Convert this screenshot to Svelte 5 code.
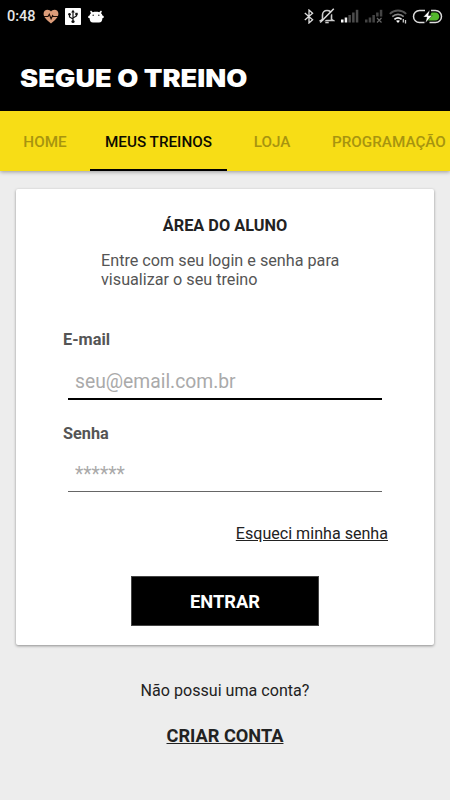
<script lang="ts">
	let email = $state('');
	let senha = $state('');
	let activeTab = $state('MEUS TREINOS');

	const tabs = ['HOME', 'MEUS TREINOS', 'LOJA', 'PROGRAMAÇÃO'];

	function handleSubmit(e: Event) {
		e.preventDefault();
	}
</script>

<div class="screen">
	<div class="top">
		<div class="status-bar">
			<span class="clock">0:48</span>
			<svg class="heart" width="16" height="15" viewBox="0 0 16 15">
				<path
					d="M8 14.4C3 10.3.6 8 .6 4.7.6 2.3 2.3.7 4.5.7 6 .7 7.3 1.4 8 2.5 8.7 1.4 10 .7 11.5.7c2.2 0 3.9 1.6 3.9 4C15.4 8 13 10.3 8 14.4z"
					fill="#dd9c79"
				/>
				<path d="M1 7.5h4l1.3-2.3 1.8 4.6 1.5-3.3.8 1H15" fill="none" stroke="#1d0d06" stroke-width="1.1" />
			</svg>
			<svg class="usb" width="16" height="17" viewBox="0 0 16 17">
				<rect width="16" height="17" rx="0.8" fill="#fff" />
				<path d="M8 3.5v9M8 11 4.5 9V6.5M8 10l3.5-2V6" fill="none" stroke="#111" stroke-width="1.2" />
				<path d="M8 1.8 9.8 4.5H6.2z" fill="#111" />
				<circle cx="8" cy="13.5" r="1.6" fill="#111" />
				<circle cx="4.5" cy="6.2" r="1.3" fill="#111" />
				<rect x="10.3" y="4.8" width="2.4" height="2.4" fill="#111" />
			</svg>
			<svg class="droid" width="16" height="13" viewBox="0 0 16 13">
				<path
					d="M3 .6 4.8 2.2C6.8 1.6 9.2 1.6 11.2 2.2L13 .6l.9.8-.9 1.8c.9.7 1.2 1.4 1.4 2.3 1 .1 1.500.7 1.400 1.600-.1.800-.6 1.200-1.400 1.200-.1 2.800-1.100 4.200-3.400 4.200H5c-2.300 0-3.300-1.400-3.400-4.200C.8 8.300.3 7.900.2 7.100.1 6.200.6 5.600 1.600 5.500 1.800 4.600 2.100 3.900 3 3.200L2.100 1.400z"
					fill="#fff"
				/>
				<circle cx="5.2" cy="5.2" r="0.8" fill="#333" />
				<circle cx="10.8" cy="5.2" r="0.8" fill="#333" />
			</svg>

			<span class="spacer"></span>

			<svg class="bluetooth" width="10" height="15" viewBox="0 0 10 15">
				<path d="M.8 4 8.6 10.8 5 14V1l3.6 3.2L.8 11" fill="none" stroke="#ddd" stroke-width="1.3" />
			</svg>
			<svg class="bell" width="16" height="16" viewBox="0 0 16 16">
				<path
					d="M3.5 11.5V7c0-2.8 1.8-4.5 4.5-4.5S12.5 4.2 12.5 7v4.5l1.5 1H2z"
					fill="none"
					stroke="#ccc"
					stroke-width="1.6"
				/>
				<path d="M6.3 14.5h3.4" stroke="#ccc" stroke-width="1.6" />
				<path d="M15.8 1.8 2.2 15.5" stroke="#000" stroke-width="1.5" />
				<path d="M14.8.8 1.2 14.5" stroke="#ddd" stroke-width="1.5" />
			</svg>
			<svg class="signal" width="18" height="14" viewBox="0 0 18 14">
				<rect x="0" y="10.5" width="2.5" height="3" fill="#fff" />
				<rect x="3.7" y="8.5" width="2.5" height="5" fill="#eee" />
				<rect x="7.4" y="6" width="2.5" height="7.5" fill="#4c4c4c" />
				<rect x="11.1" y="3.5" width="2.5" height="10" fill="#4c4c4c" />
				<rect x="14.8" y="0.8" width="2.5" height="12.7" fill="#4c4c4c" />
			</svg>
			<svg class="signal-off" width="18" height="14" viewBox="0 0 18 14">
				<rect x="0" y="10.5" width="2.5" height="3" fill="#444" />
				<rect x="3.7" y="8.5" width="2.5" height="5" fill="#444" />
				<rect x="7.4" y="6" width="2.5" height="7.5" fill="#444" />
				<rect x="11.1" y="3.5" width="2.5" height="4" fill="#444" />
				<rect x="14.8" y="0.8" width="2.5" height="6.7" fill="#444" />
				<path d="m12 9 4.5 4.5m0-4.5L12 13.5" stroke="#666" stroke-width="1.2" />
			</svg>
			<svg class="wifi" width="18" height="15" viewBox="0 0 18 15">
				<path d="M.8 4.8c4.700-4.400 11.700-4.400 16.400 0" fill="none" stroke="#555" stroke-width="1.8" />
				<path d="M3.300 7.700c3.300-3.100 8.100-3.100 11.400 0" fill="none" stroke="#888" stroke-width="1.6" />
				<path d="M5.400 10.400c2.200-1.900 5-1.900 7.200 0" fill="none" stroke="#eee" stroke-width="1.8" />
				<path d="m9 14-2-2.200c1.200-.9 2.800-.9 4 0z" fill="#fff" />
				<path d="M14.300 10v3.500M16.500 11v3.500" stroke="#ccc" stroke-width="1.3" />
			</svg>
			<svg class="battery" width="31" height="15" viewBox="0 0 31 15">
				<path
					d="M13 1.5H7.500a6 6 0 0 0 0 12H12.500M19 1.500h4.500a6 6 0 0 1 0 12h-6"
					fill="none"
					stroke="#ddd"
					stroke-width="1.5"
				/>
				<path d="M19.500 3.500h3.700c5.400 0 5.400 8 0 8h-7z" fill="#54b82c" />
				<path d="m17.800 1-6.500 7.100h3.600l-1.500 5.800 6.800-7.400h-3.800z" fill="#fff" stroke="#000" stroke-width="0.4" />
			</svg>
		</div>

		<h1>SEGUE O TREINO</h1>
	</div>

	<nav class="tabs">
		{#each tabs as tab}
			<button class="tab" class:active={activeTab === tab} onclick={() => (activeTab = tab)}>
				{tab}
			</button>
		{/each}
	</nav>

	<form class="card" onsubmit={handleSubmit}>
		<h2>ÁREA DO ALUNO</h2>
		<p class="intro">Entre com seu login e senha para visualizar o seu treino</p>

		<div class="field">
			<label for="email">E-mail</label>
			<input class="focused" type="text" id="email" bind:value={email} placeholder="seu@email.com.br" />
		</div>

		<div class="field">
			<label for="senha">Senha</label>
			<input type="password" id="senha" bind:value={senha} placeholder="******" />
		</div>

		<a class="forgot" href="#senha">Esqueci minha senha</a>

		<button type="submit" class="btn-primary">ENTRAR</button>
	</form>

	<p class="question">Não possui uma conta?</p>
	<a class="signup" href="#criar">CRIAR CONTA</a>
</div>

<style>
	:global(body) {
		background: #ededed;
	}

	.screen {
		display: flex;
		flex-direction: column;
		align-items: center;
		width: 450px;
		height: 800px;
		overflow: hidden;
		background: #ededed;
		font-family: Roboto, 'Liberation Sans', sans-serif;
		color: #222;
	}

	.top {
		width: 100%;
		height: 111px;
		flex: none;
		background: #000;
	}

	.status-bar {
		display: flex;
		align-items: center;
		height: 32px;
		padding: 0 7px 0 7px;
	}

	.clock {
		width: 36px;
		padding-top: 1px;
		color: #e6e6e6;
		font-size: 14.5px;
		font-weight: 500;
		line-height: 32px;
	}

	.usb {
		margin-left: 6px;
	}

	.droid {
		margin-left: 7px;
	}

	.spacer {
		flex: 1;
	}

	.bell {
		margin-left: 5px;
	}

	.signal,
	.signal-off,
	.wifi {
		margin-left: 6px;
	}

	.battery {
		margin-left: 5px;
	}

	/* stretched a little for a wide display look */
	h1 {
		margin: 30px 0 0 20px;
		color: #fff;
		font-family: Inter, Lato, sans-serif;
		font-size: 24px;
		font-weight: 900;
		line-height: 34px;
		white-space: nowrap;
		transform: scaleX(1.135);
		transform-origin: left;
	}

	.tabs {
		display: flex;
		width: 100%;
		height: 60px;
		flex: none;
		background: #f7dd16;
		box-shadow: 0 1px 4px rgba(0, 0, 0, 0.35);
	}

	.tab {
		flex: none;
		min-width: 90px;
		padding: 3px 15px 0;
		border: none;
		border-bottom: 2px solid transparent;
		background: none;
		color: #a7940f;
		font-family: inherit;
		font-size: 15.25px;
		font-weight: 500;
		white-space: nowrap;
	}

	.tab.active {
		border-bottom-color: #000;
		color: #0d0b00;
	}

	.card {
		display: flex;
		flex-direction: column;
		box-sizing: border-box;
		width: 418px;
		height: 456px;
		flex: none;
		margin-top: 18px;
		border-radius: 2px;
		background: #fff;
		box-shadow: 0 1px 3px rgba(0, 0, 0, 0.4);
	}

	h2 {
		margin: 27px 0 0;
		font-size: 16.3px;
		font-weight: 700;
		line-height: 20px;
		text-align: center;
	}

	.intro {
		width: 250px;
		margin: 15px 0 39px 85px;
		color: #555;
		font-size: 16.2px;
		line-height: 19px;
	}

	.field {
		display: flex;
		flex-direction: column;
		height: 94px;
		margin: 0 52px 0 46px;
	}

	label {
		margin: 2px 0 0 1px;
		color: #555;
		font-size: 16.3px;
		font-weight: 700;
		line-height: 20px;
	}

	input {
		box-sizing: border-box;
		height: 48px;
		margin: 0 0 0 6px;
		padding: 13px 7px 0;
		border: none;
		border-bottom: 1px solid #666;
		border-radius: 0;
		outline: none;
		background: none;
		color: #222;
		font-family: inherit;
		font-size: 19.3px;
	}

	input.focused {
		height: 50px;
		padding-top: 14px;
		border-bottom: 2px solid #000;
	}

	input::placeholder {
		color: #aaa;
		opacity: 1;
	}

	.forgot {
		align-self: flex-end;
		margin: 8px 46px 0 0;
		color: #222;
		font-size: 16.1px;
		line-height: 20px;
	}

	.btn-primary {
		align-self: center;
		width: 188px;
		height: 50px;
		margin: 32px 0 0;
		border: 1px solid #444;
		background: #000;
		color: #fff;
		font-family: inherit;
		font-size: 18.3px;
		font-weight: 700;
	}

	.question {
		margin: 36px 0 0;
		font-size: 16.1px;
		line-height: 20px;
	}

	.signup {
		margin-top: 23px;
		color: #222;
		font-size: 18.2px;
		font-weight: 700;
		line-height: 24px;
	}
</style>
